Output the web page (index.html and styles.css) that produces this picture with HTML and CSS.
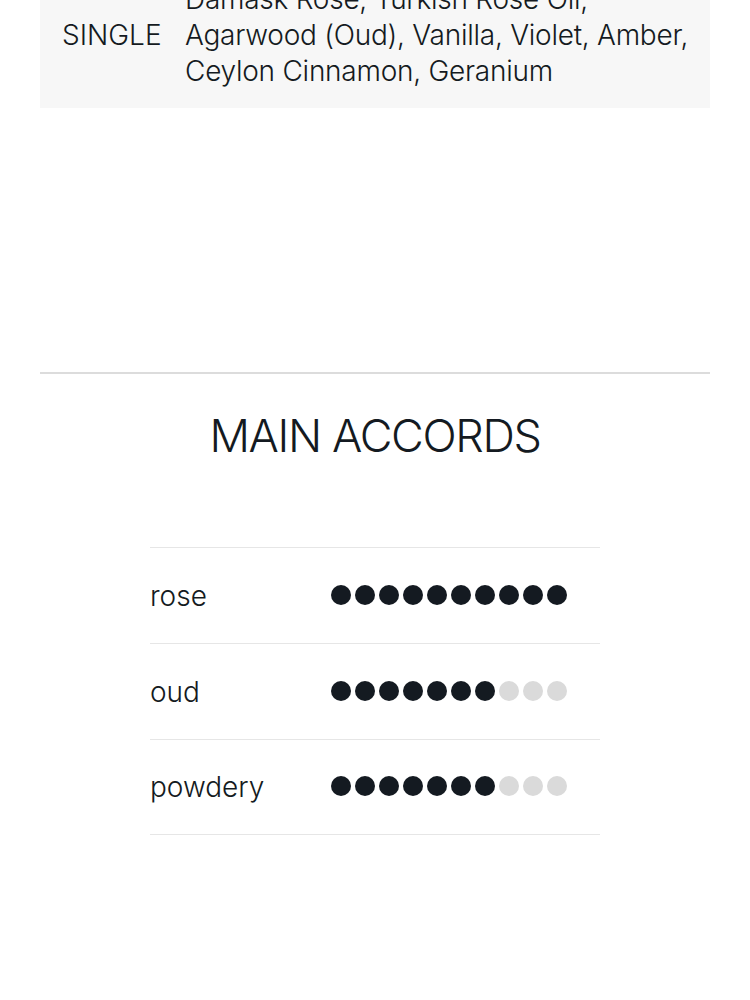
FILE: index.html
```html
<!DOCTYPE html>
<html>
<head>
<meta charset="utf-8">
<link rel="stylesheet" href="styles.css">
</head>
<body>
<div class="page">
  <section class="notes">
    <div class="notes-row">
      <div class="notes-label">SINGLE</div>
      <div class="notes-list">Damask Rose, Turkish Rose Oil, Agarwood (Oud), Vanilla, Violet, Amber, Ceylon Cinnamon, Geranium</div>
    </div>
  </section>
  <hr class="divider">
  <section class="accords">
    <h2 class="accords-title">MAIN ACCORDS</h2>
    <div class="accords-table">
      <div class="accord-row">
        <div class="accord-name">rose</div>
        <div class="dots">
          <span class="dot on"></span><span class="dot on"></span><span class="dot on"></span><span class="dot on"></span><span class="dot on"></span><span class="dot on"></span><span class="dot on"></span><span class="dot on"></span><span class="dot on"></span><span class="dot on"></span>
        </div>
      </div>
      <div class="accord-row">
        <div class="accord-name">oud</div>
        <div class="dots">
          <span class="dot on"></span><span class="dot on"></span><span class="dot on"></span><span class="dot on"></span><span class="dot on"></span><span class="dot on"></span><span class="dot on"></span><span class="dot"></span><span class="dot"></span><span class="dot"></span>
        </div>
      </div>
      <div class="accord-row">
        <div class="accord-name">powdery</div>
        <div class="dots">
          <span class="dot on"></span><span class="dot on"></span><span class="dot on"></span><span class="dot on"></span><span class="dot on"></span><span class="dot on"></span><span class="dot on"></span><span class="dot"></span><span class="dot"></span><span class="dot"></span>
        </div>
      </div>
    </div>
  </section>
</div>
</body>
</html>
```
FILE: styles.css
```css
html, body {
  margin: 0;
  padding: 0;
  background: #ffffff;
}
body {
  font-family: Inter, "Noto Sans", sans-serif;
  font-weight: 300;
  color: #141a21;
}
.page {
  padding: 0 40px;
  overflow: hidden;
  height: 1000px;
}
.notes {
  margin-top: -37px;
  background: #f7f7f7;
}
.notes-row {
  display: flex;
  align-items: center;
  padding: 18px 0 19px 22px;
  font-size: 28px;
  line-height: 36px;
}
.notes-label {
  width: 123px;
  flex: none;
}
.notes-list {
  flex: 1;
  padding-right: 20px;
  letter-spacing: -0.25px;
}
.divider {
  margin: 264px 0 0 0;
  border: none;
  border-top: 2px solid #dcdcdc;
  height: 0;
}
.accords-title {
  margin: 34px 0 0 0;
  text-align: center;
  font-size: 45px;
  font-weight: 300;
  line-height: 56px;
  letter-spacing: -1.35px;
}
.accords-table {
  width: 450px;
  margin: 83px auto 0 auto;
  border-top: 1px solid #e6e6e6;
}
.accord-row {
  display: flex;
  align-items: center;
  height: 95px;
  border-bottom: 1px solid #e6e6e6;
}
.accord-row:last-child {
  height: 94px;
}
.accord-name {
  width: 181px;
  flex: none;
  font-size: 28px;
}
.dots {
  display: flex;
  gap: 4px;
  margin-top: -2px;
}
.dot {
  width: 20px;
  height: 20px;
  border-radius: 50%;
  background: #dadada;
}
.dot.on {
  background: #141a21;
}
```
